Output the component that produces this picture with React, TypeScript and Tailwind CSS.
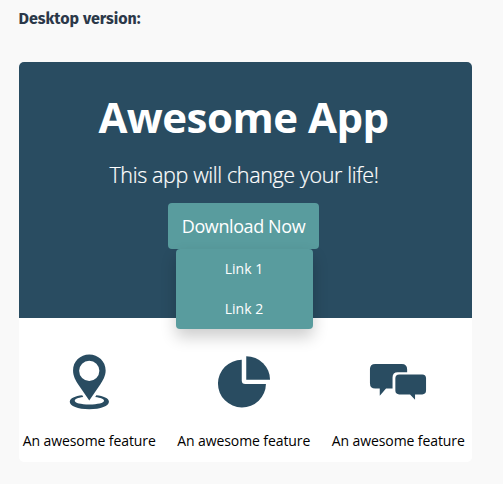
import React from "react";

function PinIcon() {
  return (
    <svg width="60" height="64" viewBox="59.25 350 60 64" fill="#294c61">
      <path
        fillRule="evenodd"
        d="M89.5 354.5C80.5 354.5 73.3 361.4 73.3 370.4C73.3 376 76 380.5 78.5 384.5L89.5 400.5L100.5 384.5C103 380.5 105.9 376 105.9 370.4C105.9 361.4 98.5 354.5 89.5 354.5ZM89.5 360.7A10.1 10.1 0 1 1 89.5 380.9A10.1 10.1 0 1 1 89.5 360.7Z"
      />
      <path d="M82.5 395.3C75.5 396 70 398.3 70 401.8C70 406 78 409.3 89.5 409.3S109.2 406 109.2 401.8C109.2 398.3 103.5 396 96.5 395.3L95.5 397C101 397.7 104.3 399 104.3 400.8C104.3 403 98 404.5 89.5 404.5S75 403 75 400.8C75 399 78 397.7 83.5 397Z" />
    </svg>
  );
}

function PieIcon() {
  return (
    <svg width="60" height="64" viewBox="213.75 350 60 64" fill="#294c61">
      <path d="M241.5 359.8V380.5Q241.5 384 245 384H265.7A24 23.8 0 1 1 241.5 359.8Z" />
      <path d="M246 356.2A24 23.5 0 0 1 269.8 379.7H246Z" />
    </svg>
  );
}

function ChatIcon() {
  return (
    <svg width="60" height="64" viewBox="368.25 350 60 64" fill="#294c61">
      <path d="M375.5 364H402Q407.4 364 407.4 369.5V372.2H398Q392.8 372.2 392.8 377.5V388.6H386.3L380 395.8V388.6H375.5Q370.2 388.6 370.2 383.3V369.3Q370.2 364 375.5 364Z" />
      <path d="M399.5 374.4H422.5Q426.3 374.4 426.3 378.2V390.6Q426.3 394.4 422.5 394.4H415.3V399.8L410.3 394.4H399.5Q395.6 394.4 395.6 390.6V378.2Q395.6 374.4 399.5 374.4Z" />
    </svg>
  );
}

function Feature({ icon }: { icon: React.ReactNode }) {
  return (
    <div className="flex flex-col items-center">
      {icon}
      <p className="mt-[17px] whitespace-nowrap text-[14px] leading-5 tracking-[-0.1px] text-black">An awesome feature</p>
    </div>
  );
}

export default function App() {
  return (
    <main className="h-[484px] w-[503px] overflow-hidden bg-[#f9f9f9] pl-[19px] pt-[7px] font-['Open_Sans','Noto_Sans',sans-serif]">
      <h2 className="-ml-[0.5px] h-6 whitespace-nowrap font-['Fira_Sans','Open_Sans',sans-serif] text-[16px] font-bold leading-6 text-[#2b3849]">
        Desktop version:
      </h2>
      <section className="mt-[31px] h-[400px] w-[453px] overflow-hidden rounded-[5px] bg-white">
        <header className="flex h-[255.5px] flex-col items-center bg-[#294c61] text-white">
          <h1 className="mt-[27px] whitespace-nowrap pr-[4px] text-[42px] font-bold leading-[56px] tracking-[-0.5px]">Awesome App</h1>
          <p className="mt-[14px] whitespace-nowrap pr-[3px] text-[21.5px] font-light leading-[32px] tracking-[-0.37px] [-webkit-text-stroke:0.2px_white]">This app will change your life!</p>
          <div className="relative mt-[12px] mr-[4px] w-[151px]">
            <button className="h-[46px] w-full whitespace-nowrap rounded-[4px] bg-[#599c9e] text-[18px] leading-[46px] tracking-[-0.4px]">
              Download Now
            </button>
            <ul className="absolute left-[7.5px] top-[46px] w-[137px] rounded-[4px] bg-[#599c9e] text-center text-[14px] leading-[40px] shadow-[0_8px_16px_rgba(0,0,0,0.2)]">
              <li>Link 1</li>
              <li>Link 2</li>
            </ul>
          </div>
        </header>
        <div className="grid grid-cols-[154.5px_154.5px_154.5px] -ml-[7px] pt-[32.5px]">
          <Feature icon={<PinIcon />} />
          <Feature icon={<PieIcon />} />
          <Feature icon={<ChatIcon />} />
        </div>
      </section>
    </main>
  );
}
